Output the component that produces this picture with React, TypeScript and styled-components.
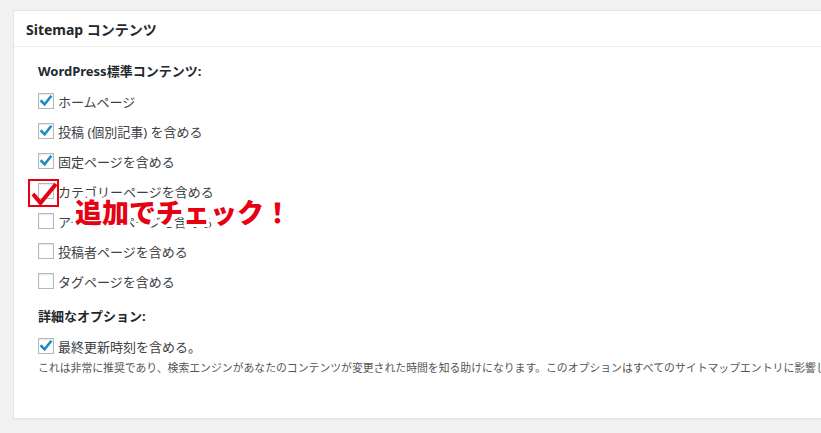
import React from 'react';
import styled, { createGlobalStyle } from 'styled-components';

const GlobalStyle = createGlobalStyle`
  html, body {
    margin: 0;
    padding: 0;
    background: #f1f1f1;
    overflow: hidden;
  }
  body {
    font-family: "Noto Sans", "Noto Sans CJK JP", sans-serif;
    color: #444;
  }
`;

const Page = styled.div`
  width: 821px;
  height: 433px;
  padding: 10px 0 0 13px;
  box-sizing: border-box;
  overflow: hidden;
`;

const Panel = styled.section`
  width: 860px;
  background: #fff;
  border: 1px solid #e5e5e5;
  box-shadow: 0 1px 1px rgba(0, 0, 0, 0.04);
`;

const PanelHeader = styled.h2`
  margin: 0;
  height: 35px;
  display: flex;
  align-items: center;
  padding: 0 12px;
  border-bottom: 1px solid #eee;
  font-size: 14px;
  font-weight: 700;
  color: #23282d;
`;

const PanelBody = styled.div`
  padding: 15px 24px 43px;
  display: flex;
  flex-direction: column;
`;

const SectionTitle = styled.h3<{ $gap?: number }>`
  margin: ${({ $gap }) => $gap ?? 0}px 0 6px;
  height: 18px;
  line-height: 18px;
  font-size: 13px;
  font-weight: 700;
  color: #23282d;
`;

const Row = styled.label`
  position: relative;
  height: 30px;
  display: flex;
  align-items: center;
  gap: 4px;
  font-size: 13px;
  color: #3c4146;
`;

const Box = styled.span`
  width: 16px;
  height: 16px;
  box-sizing: border-box;
  border: 1px solid #b4b9be;
  background: #fff;
  box-shadow: inset 0 1px 2px rgba(0, 0, 0, 0.1);
  display: flex;
  align-items: center;
  justify-content: center;
  flex-shrink: 0;
`;

const Description = styled.p`
  margin: 0;
  height: 14px;
  line-height: 14px;
  font-size: 10.85px;
  color: #555;
  white-space: nowrap;
`;

const MarkFrame = styled.span`
  position: absolute;
  left: -10px;
  top: 3px;
  width: 31px;
  height: 28px;
  box-sizing: border-box;
  border: 2px solid #e60012;
  z-index: 2;
`;

const MarkCheck = styled.svg`
  position: absolute;
  left: 1px;
  top: 1px;
`;

const Callout = styled.span`
  position: absolute;
  left: 37px;
  top: 21px;
  line-height: 32px;
  font-size: 27px;
  font-weight: 900;
  color: #e60012;
  white-space: nowrap;
  -webkit-text-stroke: 6px #fff;
  paint-order: stroke fill;
  z-index: 3;
`;

const Check: React.FC<{ checked?: boolean }> = ({ checked }) => (
  <Box>
    {checked && (
      <svg width="14" height="14" viewBox="0 0 14 14">
        <path d="M2.5 7.2 L5.6 10.3 L11.6 2.8" fill="none" stroke="#1e8cbe" strokeWidth="2.6" strokeLinecap="square" />
      </svg>
    )}
  </Box>
);

const contents = [
  { label: 'ホームページ', checked: true },
  { label: '投稿 (個別記事) を含める', checked: true },
  { label: '固定ページを含める', checked: true },
  { label: 'カテゴリーページを含める', checked: false, mark: true },
  { label: 'アーカイブページを含める', checked: false },
  { label: '投稿者ページを含める', checked: false },
  { label: 'タグページを含める', checked: false },
];

const App: React.FC = () => {
  return (
    <Page>
      <GlobalStyle />
      <Panel>
        <PanelHeader>Sitemap コンテンツ</PanelHeader>
        <PanelBody>
          <SectionTitle>WordPress標準コンテンツ:</SectionTitle>
          {contents.map((c) => (
            <Row key={c.label}>
              <Check checked={c.checked} />
              {c.label}
              {c.mark && (
                <>
                  <MarkFrame>
                    <MarkCheck width="27" height="24" viewBox="0 0 27 24">
                      <path d="M2 12 L9.5 21 L25 2" fill="none" stroke="#e60012" strokeWidth="4" />
                    </MarkCheck>
                  </MarkFrame>
                  <Callout>追加でチェック！</Callout>
                </>
              )}
            </Row>
          ))}
          <SectionTitle $gap={11}>詳細なオプション:</SectionTitle>
          <Row>
            <Check checked />
            最終更新時刻を含める。
          </Row>
          <Description>
            これは非常に推奨であり、検索エンジンがあなたのコンテンツが変更された時間を知る助けになります。このオプションはすべてのサイトマップエントリに影響します。
          </Description>
        </PanelBody>
      </Panel>
    </Page>
  );
};

export default App;
